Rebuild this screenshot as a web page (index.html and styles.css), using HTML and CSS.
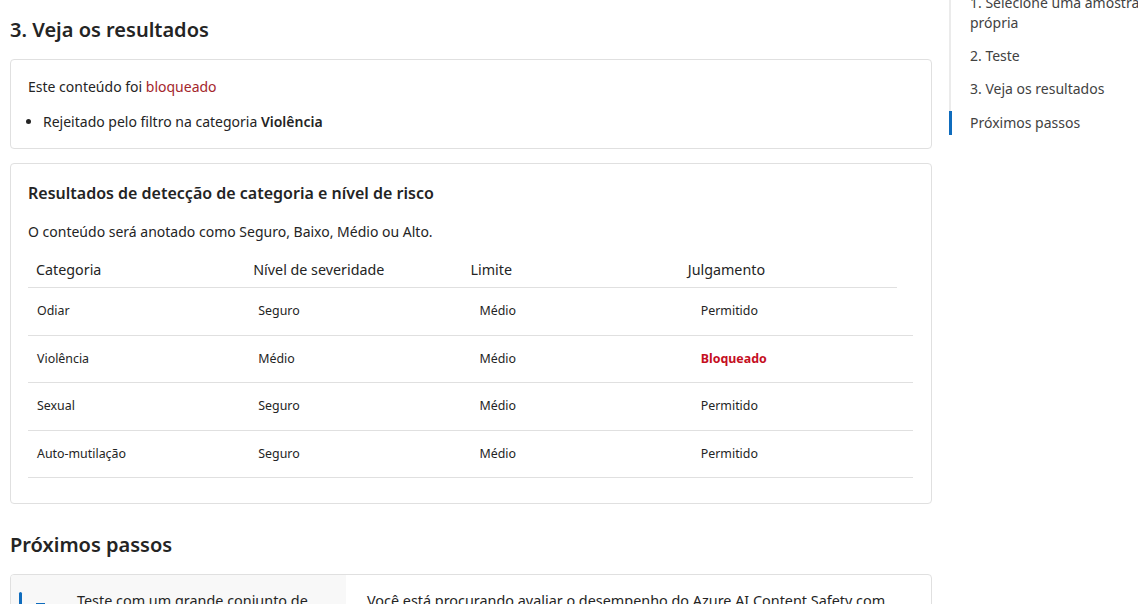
FILE: index.html
```html
<!DOCTYPE html>
<html lang="pt">
<head>
<meta charset="utf-8">
<title>Veja os resultados</title>
<link rel="stylesheet" href="styles.css">
</head>
<body>
<div class="page">
  <main class="main">
    <h2 class="section-title">3. Veja os resultados</h2>
    <div class="card verdict">
      <p class="verdict-line">Este conteúdo foi <span class="blocked">bloqueado</span></p>
      <ul class="reasons">
        <li>Rejeitado pelo filtro na categoria <strong>Violência</strong></li>
      </ul>
    </div>
    <div class="card results">
      <h3 class="card-title">Resultados de detecção de categoria e nível de risco</h3>
      <p class="card-desc">O conteúdo será anotado como Seguro, Baixo, Médio ou Alto.</p>
      <div class="table-head">
        <div class="th">Categoria</div>
        <div class="th">Nível de severidade</div>
        <div class="th">Limite</div>
        <div class="th">Julgamento</div>
      </div>
      <div class="table-body">
        <div class="tr"><div class="td">Odiar</div><div class="td">Seguro</div><div class="td">Médio</div><div class="td">Permitido</div></div>
        <div class="tr"><div class="td">Violência</div><div class="td">Médio</div><div class="td">Médio</div><div class="td judg-blocked">Bloqueado</div></div>
        <div class="tr"><div class="td">Sexual</div><div class="td">Seguro</div><div class="td">Médio</div><div class="td">Permitido</div></div>
        <div class="tr"><div class="td">Auto-mutilação</div><div class="td">Seguro</div><div class="td">Médio</div><div class="td">Permitido</div></div>
      </div>
    </div>
    <h2 class="section-title next-title">Próximos passos</h2>
    <div class="card next">
      <div class="next-tabs">
        <div class="next-tab active">
          <span class="tab-bar"></span>
          <span class="tab-icon"></span>
          <span class="tab-text">Teste com um grande conjunto de</span>
        </div>
      </div>
      <div class="next-content">Você está procurando avaliar o desempenho do Azure AI Content Safety com</div>
    </div>
  </main>
  <aside class="toc">
    <ul class="toc-list">
      <li class="toc-item">1. Selecione uma amostra própria</li>
      <li class="toc-item">2. Teste</li>
      <li class="toc-item">3. Veja os resultados</li>
      <li class="toc-item current">Próximos passos</li>
    </ul>
  </aside>
</div>
</body>
</html>
```

FILE: styles.css
```css
* { box-sizing: border-box; }
html, body { margin: 0; padding: 0; background: #fff; }
body {
  font-family: "Segoe UI", "Noto Sans", "Open Sans", sans-serif;
  color: #242424;
  font-size: 14px;
  overflow: hidden;
  height: 604px;
}
.page {
  display: flex;
  align-items: flex-start;
  width: 1138px;
}
.main {
  width: 922px;
  margin-left: 10px;
  margin-top: 16px;
  flex: none;
}
.section-title {
  font-size: 20px;
  font-weight: 600;
  line-height: 28px;
  margin: 0 0 15px 0;
}
.next-title { margin-top: 27px; margin-bottom: 15px; }
.card {
  border: 1px solid #e0e0e0;
  border-radius: 4px;
  background: #fff;
}
.verdict { padding: 17px 17px 16px 17px; margin-bottom: 14px; }
.verdict-line { margin: 0; line-height: 20px; }
.blocked { color: #a4262c; }
.reasons { margin: 15px 0 0 0; padding-left: 15px; line-height: 20px; }
strong { font-weight: 600; }
.results { padding: 17px 17px 25px 17px; }
.card-title { font-size: 16px; font-weight: 600; line-height: 24px; margin: 0 0 17px 0; }
.card-desc { margin: 0 0 18px 0; line-height: 20px; }
.table-head {
  display: grid;
  grid-template-columns: repeat(4, 1fr);
  width: 869px;
  border-bottom: 1px solid #e0e0e0;
}
.th { padding: 0 8px 7px 8px; line-height: 20px; font-size: 14.3px; }
.tr {
  display: grid;
  grid-template-columns: repeat(4, 1fr);
  width: 885px;
  border-bottom: 1px solid #e0e0e0;
  height: 47.5px;
  align-items: center;
}
.td { padding: 0 9px; font-size: 12.4px; line-height: 16px; }
.judg-blocked { color: #c50f1f; font-weight: 700; }
.next {
  display: flex;
  height: 60px;
  overflow: hidden;
}
.next-tabs { width: 335px; background: #f8f8f8; flex: none; }
.next-tab { display: flex; align-items: flex-start; padding-top: 17px; }
.tab-bar { width: 3px; height: 24px; background: #0f6cbd; margin-left: 8px; border-radius: 2px; flex: none; }
.tab-icon { width: 9px; height: 2px; background: #0f6cbd; margin-left: 14px; margin-top: 11px; flex: none; }
.tab-text { margin-left: 32px; font-size: 14.4px; line-height: 20px; margin-top: -1px; white-space: nowrap; }
.next-content { padding: 16px 0 0 21px; font-size: 14.4px; line-height: 20px; white-space: nowrap; }
.toc { margin-left: 17px; width: 200px; flex: none; }
.toc-list {
  list-style: none;
  margin: -9px 0 0 0;
  padding: 0;
  border-left: 2px solid #ebebeb;
}
.toc-item {
  padding: 2px 0 2px 19px;
  margin-bottom: 9px;
  line-height: 20px;
  font-size: 14px;
  color: #424242;
}
.toc-item:first-child { width: 190px; }
.toc-item.current { border-left: 3px solid #0f6cbd; margin-left: -2px; padding-left: 18px; margin-top: 10px; }
```
